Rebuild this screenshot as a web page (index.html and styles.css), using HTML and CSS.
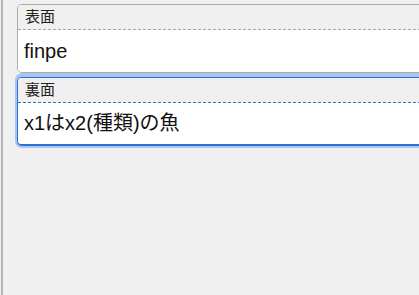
FILE: index.html
```html
<!DOCTYPE html>
<html lang="ja">
<head>
<meta charset="utf-8">
<link rel="stylesheet" href="styles.css">
</head>
<body>
<div class="page">
  <div class="edge"></div>
  <div class="fields">
    <div class="card">
      <div class="card-head">表面</div>
      <div class="card-body">finpe</div>
    </div>
    <div class="card card-focus">
      <div class="card-head">裏面</div>
      <div class="card-body">x1はx2(種類)の魚</div>
    </div>
  </div>
</div>
</body>
</html>
```

FILE: styles.css
```css
html, body {
  margin: 0;
  padding: 0;
  background: #f0f0f0;
  overflow: hidden;
  width: 419px;
  height: 295px;
}
.page {
  display: flex;
  height: 295px;
  font-family: "Liberation Sans", Arial, "Noto Sans CJK JP", sans-serif;
  color: #111;
  overflow: hidden;
}
.edge {
  width: 2px;
  margin-left: 1px;
  background: #b4b4b4;
  flex: none;
}
.fields {
  display: flex;
  flex-direction: column;
  gap: 4px;
  padding-top: 4px;
  margin-left: 14px;
  flex: none;
  width: 460px;
}
.card {
  border: 1px solid #ababab;
  border-radius: 5px;
  background: #fff;
  overflow: hidden;
}
.card-head {
  height: 24px;
  line-height: 24px;
  padding-left: 7px;
  font-size: 15px;
  color: #222;
  background: #f0f0f0;
  border-bottom: 1px dashed #a8a8a8;
}
.card-body {
  height: 42px;
  line-height: 42px;
  padding-left: 6px;
  font-size: 20px;
  background: #fff;
}
.card-focus {
  border-color: #2a72d9;
  border-bottom-width: 2px;
  box-shadow: 0 0 0 2px #a9c5ec, 0 -2px 0 2px #a9c5ec;
}
.card-focus .card-body {
  height: 41px;
  line-height: 40px;
}
.card-focus .card-head {
  border-bottom-color: #2a72d9;
}
```
